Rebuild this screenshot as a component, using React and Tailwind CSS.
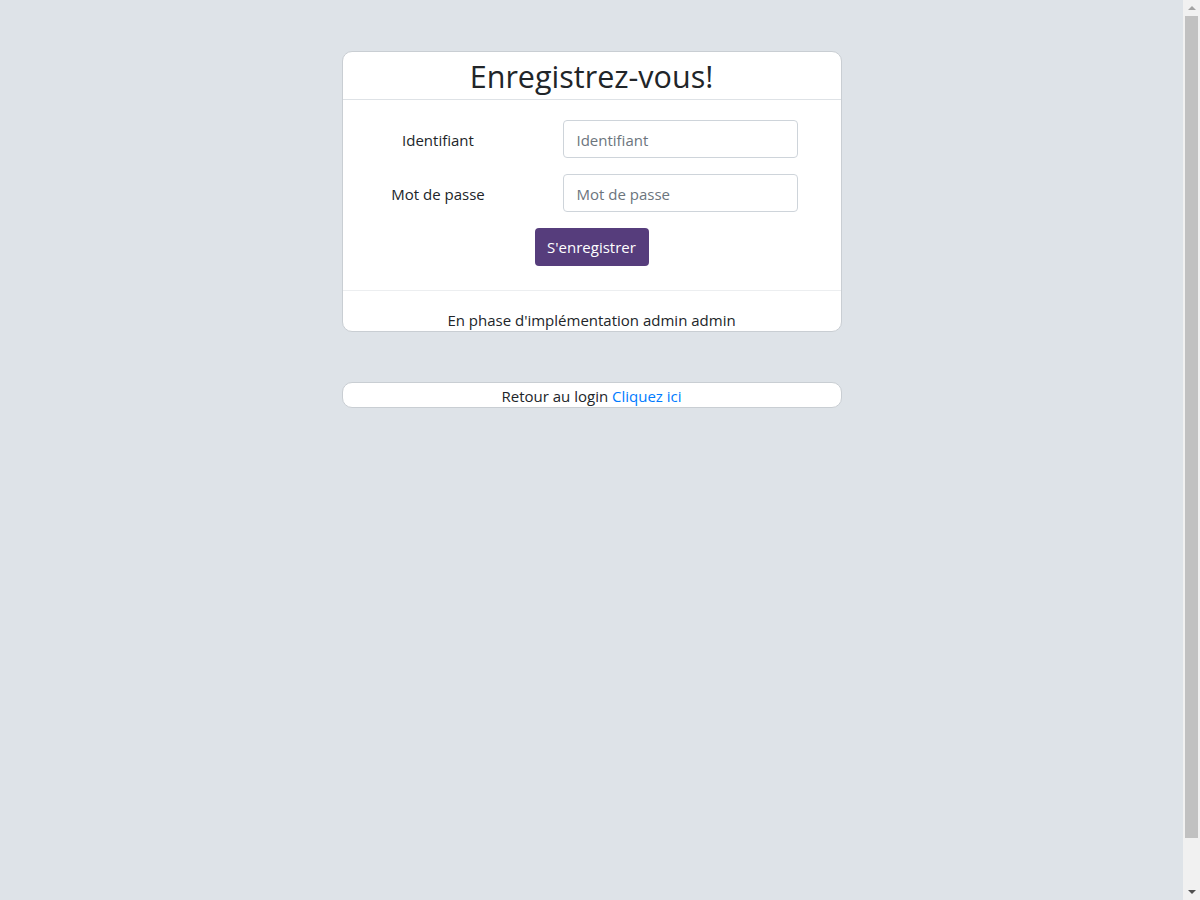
export default function App() {
  const inputCls =
    "h-[38px] w-[235px] rounded-[4px] border border-[#ced4da] bg-white px-[13px] pt-[1px] text-[15px] text-[#495057] placeholder-[#6c757d] outline-none";
  return (
    <div
      className="flex h-[900px] w-full overflow-hidden text-[15px] leading-[24px] text-[#212529]"
      style={{ fontFamily: '"Open Sans", "Noto Sans", sans-serif' }}
    >
      <div className="flex-1 bg-[#dee3e8] pt-[51px]">
        <div className="mx-auto w-[500px]">
          <div className="overflow-hidden rounded-[10px] border border-[#c9ced3] bg-white">
            <div className="flex h-[48px] items-center justify-center border-b border-[#dee2e6]">
              <h2 className="text-[30.5px] leading-[38px] font-normal text-[#212529]">Enregistrez-vous!</h2>
            </div>
            <div className="px-[20px] pt-[20px] pb-[24px]">
              <div className="flex items-center">
                <label className="w-[151px] pt-[1px] text-center">Identifiant</label>
                <div className="ml-[49px]">
                  <input type="text" placeholder="Identifiant" className={inputCls} />
                </div>
              </div>
              <div className="mt-[16px] flex items-center">
                <label className="w-[151px] pt-[1px] text-center">Mot de passe</label>
                <div className="ml-[49px]">
                  <input type="password" placeholder="Mot de passe" className={inputCls} />
                </div>
              </div>
              <div className="mt-[16px] flex justify-center">
                <button
                  type="button"
                  className="h-[38px] w-[114px] rounded-[4px] bg-[#563d7c] text-[15px] text-white"
                >
                  S'enregistrer
                </button>
              </div>
            </div>
            <div className="h-[41px] border-t border-[#eceef0] pt-[17px] text-center">
              En phase d'implémentation admin admin
            </div>
          </div>
          <div className="mt-[50px] h-[26px] rounded-[10px] border border-[#c9ced3] bg-white pt-[2px] text-center leading-[22px]">
            Retour au login <a href="#" className="text-[#007bff]">Cliquez ici</a>
          </div>
        </div>
      </div>
      <div className="flex h-[900px] w-[17px] shrink-0 flex-col bg-[#f1f1f1]">
        <div className="flex h-[16px] shrink-0 items-center justify-center">
          <div className="h-0 w-0 border-x-[4px] border-b-[4px] border-x-transparent border-b-[#a3a3a3]" />
        </div>
        <div className="flex h-[867px] shrink-0 justify-center">
          <div className="h-[822px] w-[13px] bg-[#c1c1c1]" />
        </div>
        <div className="flex h-[17px] shrink-0 items-center justify-center">
          <div className="h-0 w-0 border-x-[4px] border-t-[4px] border-x-transparent border-t-[#505050]" />
        </div>
      </div>
    </div>
  );
}
